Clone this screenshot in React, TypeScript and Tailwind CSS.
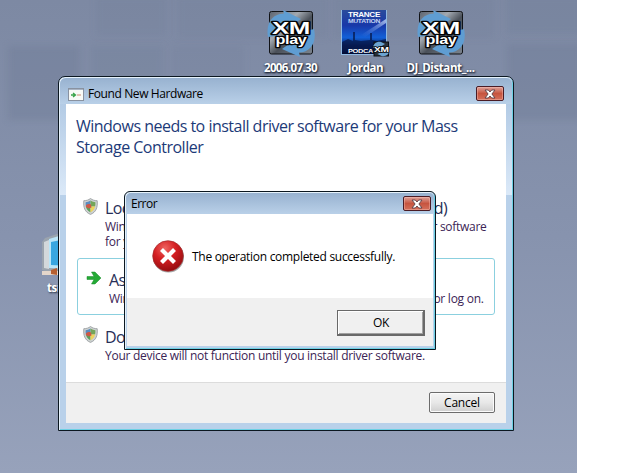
import React from "react";

function XmGlyph({ id }: { id: string }) {
  return (
    <svg viewBox="0 0 50 48" className="h-[48px] w-[50px]">
      <defs>
        <linearGradient id={id} x1="0" y1="0" x2="1" y2="1">
          <stop offset="0" stopColor="#5c6470" />
          <stop offset="0.35" stopColor="#a3a9b1" />
          <stop offset="0.55" stopColor="#4a5059" />
          <stop offset="1" stopColor="#7d858f" />
        </linearGradient>
      </defs>
      <rect x="3.500" y="1.500" width="43" height="42.500" rx="2" fill={`url(#${id})`} stroke="#111317" />
      <path d="M2 27C0 13 6 4 18 3.500L17 0l18 9-15 10-1-5c-6 1-8 5-8 12z" fill="#5f9dd2" />
      <path d="M48 19c3 13-3 23-15 23.500l1 4.500-18-8 14-10 1 4c6-1 9-5 9-12z" fill="#5f9dd2" />
      <g fontFamily="Liberation Sans, sans-serif" fontWeight="bold" fill="#fff" stroke="#050608" strokeWidth="2.600" paintOrder="stroke" strokeLinejoin="round" textAnchor="middle">
        <text x="25" y="24" fontSize="17" textLength="38" lengthAdjust="spacingAndGlyphs">XM</text>
        <text x="25" y="34" fontSize="12.500" textLength="31" lengthAdjust="spacingAndGlyphs">play</text>
      </g>
    </svg>
  );
}

function PodcastCover() {
  return (
    <svg viewBox="0 0 49 48" className="h-[48px] w-[49px]">
      <defs>
        <linearGradient id="night" x1="0" y1="0" x2="0" y2="1">
          <stop offset="0" stopColor="#2a4c9c" />
          <stop offset=".35" stopColor="#1838a8" />
          <stop offset=".62" stopColor="#1260d8" />
          <stop offset=".8" stopColor="#08246c" />
          <stop offset="1" stopColor="#020a2e" />
        </linearGradient>
        <linearGradient id="beam" x1="0" y1="1" x2="1" y2="0">
          <stop offset="0" stopColor="#4f7fe0" stopOpacity="0" />
          <stop offset="1" stopColor="#b9cbf2" stopOpacity=".9" />
        </linearGradient>
      </defs>
      <rect x=".5" y="-.5" width="45" height="45" fill="url(#night)" stroke="#8fb9e2" />
      <path d="M20 25 45 9v4L24 27z" fill="url(#beam)" />
      <path d="M1 32l6-3 5 2v-9h2v8l6 1 9-1v-7h2v7l5 1 9-2v12H1z" fill="#051644" opacity=".7" />
      <g fontFamily="Liberation Sans, sans-serif" fontWeight="bold" fill="#fff">
        <text x="7" y="7" fontSize="7" textLength="32" lengthAdjust="spacingAndGlyphs">TRANCE</text>
        <text x="7" y="13" fontSize="5.500" textLength="32" lengthAdjust="spacingAndGlyphs" fill="#c3d2f2">MUTATION</text>
        <text x="7" y="43" fontSize="6" textLength="25" lengthAdjust="spacingAndGlyphs">PODCA</text>
      </g>
      <rect x="33" y="32" width="14.500" height="14" fill="#2a3038" stroke="#0c0f14" />
      <path d="M32 38c0-4 4-7 8-6l4 2-5 3zM48.500 40c0 4-4 7-8 6l-4-2 5-3z" fill="#6ba4d2" />
      <text x="33" y="41.500" fontSize="7.500" fontFamily="Liberation Sans, sans-serif" fontWeight="bold" fill="#fff" stroke="#0c0f14" strokeWidth="1.500" paintOrder="stroke" textLength="14.500" lengthAdjust="spacingAndGlyphs">XM</text>
    </svg>
  );
}

function Shield({ id }: { id: string }) {
  return (
    <svg viewBox="0 0 15 17" className="h-[17px] w-[15px] shrink-0">
      <defs>
        <clipPath id={id}>
          <path d="M7.500 2.600C5.700 3.800 4.200 4.200 2.600 4.300c-.2 4.500.9 8.200 4.900 9.900 4-1.700 5.100-5.400 4.900-9.900-1.600-.1-3.100-.5-4.900-1.700z" />
        </clipPath>
      </defs>
      <path d="M7.500.5C5.500 2 3.500 2.700.8 2.700c-.6 6.500.9 11.500 6.700 13.700 5.800-2.200 7.300-7.200 6.700-13.700C11.500 2.700 9.500 2 7.500.5z" fill="#ced2d2" stroke="#93989b" strokeWidth=".8" />
      <g clipPath={`url(#${id})`}>
        <rect width="7.500" height="8.500" fill="#5a8cc0" />
        <rect x="7.500" width="7.500" height="8.500" fill="#74a55a" />
        <rect y="8.500" width="7.500" height="8.500" fill="#5aa05c" />
        <rect x="7.500" y="8.500" width="7.500" height="8.500" fill="#ecd45c" />
        <path d="M2 9.500C3.500 6 5 5.500 8 6.500l.5 3-3 1C4 9.500 3 9 2 9.500z" fill="#cf5846" />
      </g>
    </svg>
  );
}

function CloseButton() {
  return (
    <button className="flex h-[15px] w-[28px] items-center justify-center rounded-[2px] border border-[#4a1c25] bg-linear-to-b from-[#dda099] from-0% via-[#c6543f] via-50% to-[#d4705c] shadow-[inset_0_0_0_1px_rgba(255,200,190,0.4)]">
      <svg viewBox="0 0 12 10" className="h-[10px] w-[12px]">
        <path d="M1 1h3.300L6 3l1.700-2H11L7.900 5 11 9H7.700L6 7 4.300 9H1l3.100-4z" fill="#fff" stroke="#574047" strokeWidth=".9" />
      </svg>
    </button>
  );
}

function DesktopIcon({ children, label, labelClass }: { children: React.ReactNode; label: string; labelClass: string }) {
  return (
    <div className="flex w-[75px] flex-col items-center">
      {children}
      <span className={`mt-[2px] h-4 whitespace-nowrap text-[11.5px] leading-4 font-bold text-white [text-shadow:1px_1px_2px_#222b3d,0_1px_2px_#222b3d] ${labelClass}`}>{label}</span>
    </div>
  );
}

export default function App() {
  return (
    <div className="relative h-[473px] w-[640px] overflow-hidden bg-white font-['Open_Sans','Noto_Sans',sans-serif] text-[12px] tracking-[-0.27px] text-black">
      <div className="relative h-full w-[577px] overflow-hidden bg-linear-to-b from-[#7d89a3] via-[#8793ae] via-50% to-[#97a2bb]">
        <div className="absolute top-[46px] left-[8px] h-[74px] w-[72px] bg-[#6b7792]/30 blur-[3px]" />
        <div className="absolute top-[46px] left-[91px] h-[74px] w-[72px] bg-[#6b7792]/20 blur-[3px]" />
        <div className="absolute top-[46px] left-[172px] h-[74px] w-[72px] bg-[#6b7792]/15 blur-[3px]" />
        <div className="absolute top-[-4px] left-[96px] h-[40px] w-[70px] bg-[#6b7792]/15 blur-[3px]" />
        <div className="absolute top-[-4px] left-[178px] h-[42px] w-[149px] bg-[#6b7792]/15 blur-[3px]" />
        <div className="absolute top-[-4px] left-[334px] h-[42px] w-[160px] bg-[#6b7792]/15 blur-[3px]" />
        <div className="absolute top-[-4px] left-[507px] h-[38px] w-[74px] bg-[#6b7792]/20 blur-[3px]" />
        <div className="absolute top-[44px] left-[507px] h-[76px] w-[74px] bg-[#6b7792]/30 blur-[3px]" />

        <div className="absolute top-[10px] left-[253px] flex">
          <DesktopIcon label="2006.07.30" labelClass="tracking-[-0.6px]"><XmGlyph id="xmA" /></DesktopIcon>
          <DesktopIcon label="Jordan" labelClass="tracking-[-0.4px]"><PodcastCover /></DesktopIcon>
          <DesktopIcon label="DJ_Distant_..." labelClass="tracking-[-0.4px]"><XmGlyph id="xmB" /></DesktopIcon>
        </div>

        <div className="absolute top-[234px] left-[41px] w-[48px]">
          <svg viewBox="0 0 48 46" className="h-[46px] w-[48px]">
            <path d="M1 8 4 4 16 0l12 1v35l-13 5L1 36z" fill="#9ba4ae" />
            <path d="M3 8 8 6v29l-5-1z" fill="#d3d8db" />
            <path d="M8 5 18 2h12v33L8 34z" fill="#b9e5f8" />
            <path d="M10 8 30 4v28l-20-1z" fill="#38a6e0" />
            <path d="M1 37h16v4H1z" fill="#e4d6cb" />
            <path d="M10 36l6-2v7l-6-1z" fill="#b65f30" />
          </svg>
          <span className="block pl-[6px] text-[11.5px] leading-4 font-bold tracking-[-0.5px] text-white [text-shadow:1px_1px_2px_#222b3d]">tsmmc</span>
        </div>
      </div>

      <section className="absolute top-[76px] left-[58px] flex h-[355px] w-[456px] flex-col rounded-t-[7px] border border-[#0b1720] bg-[#b9d1ea] px-[7px] pb-[7px] shadow-[inset_1px_1px_0_#e6f2fb,inset_-1px_-1px_0_#6cd0e4]">
        <div className="absolute inset-x-[1px] top-[1px] h-[26px] rounded-t-[6px] bg-linear-to-b from-[#98b2d0] to-[#b9d0e8]" />
        <div className="absolute top-[27px] left-[1px] h-[91px] w-[6px] bg-linear-to-b from-[#b3cbe5] to-[#dbe9f8]" />
        <div className="absolute top-[27px] right-[1px] h-[91px] w-[6px] bg-linear-to-b from-[#b3cbe5] to-[#dbe9f8]" />
        <header className="relative flex h-[27px] shrink-0 items-center pt-[6px] pr-[2px] pl-[2px]">
          <svg viewBox="0 0 16 13" className="mt-[2px] h-[13px] w-[16px]">
            <rect x=".5" y=".5" width="15" height="12" fill="#f8faf7" stroke="#8992a0" />
            <path d="M1 1.500h14" stroke="#a8b3c3" />
            <path d="M3 7h4M5 5l2.500 2L5 9" stroke="#37a348" fill="none" strokeWidth="1.300" />
            <path d="M9 7h4" stroke="#c98a70" />
          </svg>
          <span className="ml-[4px] grow pt-px tracking-[-0.4px] whitespace-nowrap">Found New Hardware</span>
          <CloseButton />
        </header>
        <main className="flex min-h-0 grow flex-col bg-white">
          <h1 className="h-[93px] shrink-0 pt-[12px] pl-[10px] text-[16px] leading-[21px] tracking-[-0.51px] whitespace-nowrap text-[#1c3a78]">
            Windows needs to install driver software for your Mass<br />Storage Controller
          </h1>
          <div className="flex h-[61px] shrink-0 pl-[17px] text-[#3b2455]">
            <div className="pt-[1px]"><Shield id="shieldA" /></div>
            <div className="ml-[7px] whitespace-nowrap">
              <h2 className="text-[16px] leading-[22px] tracking-[-0.6px] text-[#282f58]">Locate and install driver software (recommended)</h2>
              <p className="leading-[15px] tracking-[-0.285px]">Windows will guide you through the process of installing driver software</p>
              <p className="leading-[15px]">for your device.</p>
            </div>
          </div>
          <div className="ml-[11px] flex h-[57px] w-[418px] shrink-0 rounded-[3px] border border-[#8bd0df] pl-[8px] text-[#3b2455]">
            <svg viewBox="0 0 16 16" className="mt-[11px] h-4 w-4">
              <path d="M1 6.500h7L5.500 2H9l6 6-6 6H5.500L8 9.500H1z" fill="#24aa35" stroke="#178a28" strokeWidth=".5" />
            </svg>
            <div className="ml-[7px] pt-[11px] whitespace-nowrap">
              <h2 className="text-[16px] leading-[21px] tracking-[-0.5px] text-[#282f58]">Ask me again later</h2>
              <p className="leading-[15px] tracking-[-0.26px]">Windows will ask again the next time you plug in your device or log on.</p>
            </div>
          </div>
          <div className="flex grow pt-[10px] pl-[17px] text-[#3b2455]">
            <div className="pt-[1px]"><Shield id="shieldB" /></div>
            <div className="ml-[7px] pt-px whitespace-nowrap">
              <h2 className="text-[16px] leading-[22px] tracking-[-0.5px] text-[#282f58]">Don't show this message again for this device</h2>
              <p className="leading-[15px]">Your device will not function until you install driver software.</p>
            </div>
          </div>
          <footer className="flex h-[41px] shrink-0 justify-end border-t border-[#dcdcdc] bg-[#f0f0f0] pt-[9px] pr-[11px]">
            <button className="h-[21px] w-[66px] rounded-[2px] border border-[#6c6c6c] bg-linear-to-b from-[#f4f4f4] via-[#e8e8e8] via-50% to-[#cfcfcf] pt-px tracking-[-0.2px] shadow-[inset_0_0_0_1px_#fbfbfb]">Cancel</button>
          </footer>
        </main>
      </section>

      <section className="absolute top-[191px] left-[124px] flex h-[159px] w-[312px] flex-col rounded-t-[6px] border border-[#0b1720] bg-[#b9d1ea] px-[2px] pb-[3px] shadow-[inset_1px_1px_0_#e6f2fb,inset_-1px_-1px_0_#6cd0e4]">
        <div className="absolute inset-x-[1px] top-[1px] h-[21px] rounded-t-[5px] bg-linear-to-b from-[#98b2d0] to-[#b9d0e8]" />
        <header className="relative flex h-[22px] shrink-0 items-center pt-[1px] pr-[2px] pl-[4px]">
          <span className="grow pt-px tracking-[-0.5px]">Error</span>
          <CloseButton />
        </header>
        <main className="flex h-[84px] shrink-0 items-center bg-white pl-[25px]">
          <svg viewBox="0 0 32 33" className="h-[33px] w-[32px]">
            <defs>
              <radialGradient id="stop" cx=".4" cy=".25" r=".8">
                <stop offset="0" stopColor="#ee6460" />
                <stop offset=".45" stopColor="#d51f22" />
                <stop offset="1" stopColor="#8d0b0e" />
              </radialGradient>
            </defs>
            <circle cx="16.500" cy="17" r="15.500" fill="#69706f" opacity=".6" />
            <circle cx="16" cy="16" r="15.300" fill="url(#stop)" stroke="#a52b2c" strokeWidth=".7" />
            <path d="m9.500 9.500 13 13m0-13-13 13" stroke="#fff" strokeWidth="4.200" />
          </svg>
          <span className="ml-[8px] pt-px tracking-[-0.29px] whitespace-nowrap">The operation completed successfully.</span>
        </main>
        <footer className="flex grow justify-end bg-[#f0f0f0] pt-[12px] pr-[8px]">
          <button className="h-[26px] w-[88px] border border-r-2 border-b-2 border-[#696969] bg-[#f0f0f0] pl-px shadow-[inset_1px_1px_0_#fff,inset_-1px_-1px_0_#a0a0a0]">OK</button>
        </footer>
      </section>
    </div>
  );
}
